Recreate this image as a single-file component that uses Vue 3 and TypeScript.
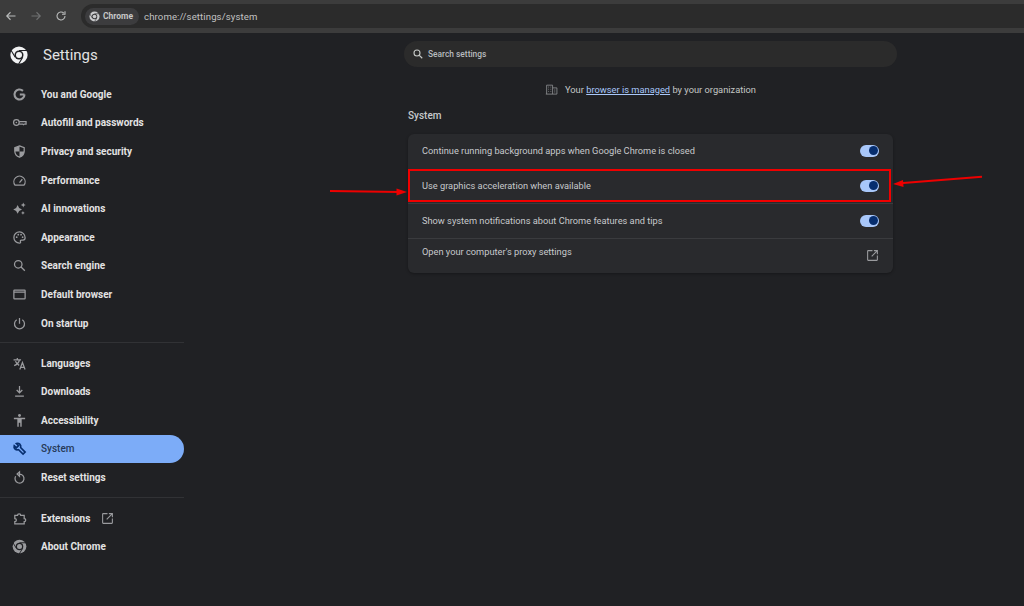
<script setup lang="ts">
// Page Settings > System de Chrome, thème sombre, avec annotations rouges par-dessus.
type NavItem = { label: string; icon: string; active?: boolean; external?: boolean }

const icons: Record<string, string> = {
  gauge: 'M4.800 19.500h14.400a9 9 0 1 0-14.400 0zM12 15.500l4.500-5.500',
  search: 'M10 4a6 6 0 1 0 0 12 6 6 0 0 0 0-12zM14.500 14.500L20.500 20.500',
  window: 'M4 5h16a1 1 0 0 1 1 1v12a1 1 0 0 1-1 1H4a1 1 0 0 1-1-1V6a1 1 0 0 1 1-1zM3 8h18',
  power: 'M12 3v9.500M7.500 6a8 8 0 1 0 9 0',
  translate: 'M2.500 6h12M8.500 3v3M12 6c-.8 3.700-3.500 7.200-8.500 9.500M5.500 8.500c1 2.500 3.500 5 6 6.500M12.500 21.500l4.200-11 4.200 11M14 18h5.500',
  download: 'M12 3v11M7.500 9.500L12 14l4.500-4.500M5 19.500h14',
  reset: 'M12 6.500a7.200 7.200 0 1 1-6.200 3.500M12 3v7l-3.800-3.500z',
  puzzle: 'M4.500 7h4.300a2.600 2.600 0 0 1 5.200 0h5.500v5a2.500 2.500 0 0 1 0 5v3.500H4.500V17a2.500 2.500 0 0 0 0-5z',
}

const groups: NavItem[][] = [
  [
    { label: 'You and Google', icon: 'google' },
    { label: 'Autofill and passwords', icon: 'key' },
    { label: 'Privacy and security', icon: 'shield' },
    { label: 'Performance', icon: 'gauge' },
    { label: 'AI innovations', icon: 'sparkle' },
    { label: 'Appearance', icon: 'palette' },
    { label: 'Search engine', icon: 'search' },
    { label: 'Default browser', icon: 'window' },
    { label: 'On startup', icon: 'power' },
  ],
  [
    { label: 'Languages', icon: 'translate' },
    { label: 'Downloads', icon: 'download' },
    { label: 'Accessibility', icon: 'person' },
    { label: 'System', icon: 'wrench', active: true },
    { label: 'Reset settings', icon: 'reset' },
  ],
  [
    { label: 'Extensions', icon: 'puzzle', external: true },
    { label: 'About Chrome', icon: 'chrome' },
  ],
]

const rows = [
  { label: 'Continue running background apps when Google Chrome is closed', toggle: true },
  { label: 'Use graphics acceleration when available', toggle: true, marked: true },
  { label: 'Show system notifications about Chrome features and tips', toggle: true },
  { label: "Open your computer's proxy settings", toggle: false },
]
</script>

<template>
  <div class="page">
    <header class="toolbar">
      <svg class="tb-icon back" viewBox="0 0 24 24"><path d="M21 12H4M11 4.500L3.500 12l7.500 7.500" /></svg>
      <svg class="tb-icon forward dim" viewBox="0 0 24 24"><path d="M3 12h17M13 4.500l7.500 7.500-7.500 7.500" /></svg>
      <svg class="tb-icon reload" viewBox="0 0 24 24"><path d="M20 12a8 8 0 1 1-2.300-5.700M20 2.500v6h-6" /></svg>
      <div class="omnibox">
        <span class="chip">
          <svg class="chip-logo" viewBox="0 0 24 24">
            <circle cx="12" cy="12" r="11" fill="#c9cacc" />
            <circle cx="12" cy="12" r="6" fill="#3c3c3e" />
            <circle cx="12" cy="12" r="4" fill="#c9cacc" />
            <path d="M12 6h10M7 15L2 6.500M17 15l-5 8.500" stroke="#3c3c3e" stroke-width="1.500" fill="none" />
          </svg>
          Chrome
        </span>
        <span class="url">chrome://settings/system</span>
      </div>
    </header>

    <div class="body">
      <aside class="sidebar">
        <div class="brand">
          <svg class="brand-logo" viewBox="0 0 24 24">
            <circle cx="12" cy="12" r="11.500" fill="#f1f2f3" />
            <circle cx="12" cy="12" r="6" fill="#202124" />
            <circle cx="12" cy="12" r="4" fill="#f1f2f3" />
            <path d="M12 6h11M7 15L1.500 6M17 15l-5.500 9" stroke="#202124" stroke-width="1.500" fill="none" />
          </svg>
          <span class="brand-name">Settings</span>
        </div>

        <nav v-for="(group, i) in groups" :key="i" class="nav-group">
          <a v-for="item in group" :key="item.label" class="nav-item" :class="{ active: item.active }">
            <svg class="nav-icon" viewBox="0 0 24 24">
              <path v-if="icons[item.icon]" :d="icons[item.icon]" />
              <path v-else-if="item.icon === 'google'" class="heavy" d="M20 12h-7.500M20 12a8 8 0 1 1-2.500-5.800" />
              <template v-else-if="item.icon === 'key'">
                <circle cx="7" cy="12" r="4.500" />
                <circle class="solid" cx="7" cy="12" r="1.300" />
                <path d="M11.500 10.500H22.500v4h-3l-1.200 1-1.200-1h-5.600" />
              </template>
              <template v-else-if="item.icon === 'shield'">
                <path d="M12 3l7.500 2.800v5.700c0 4.500-3.100 8-7.500 9.500-4.400-1.500-7.500-5-7.500-9.500V5.800z" />
                <path class="solid" d="M12 3v9H4.500V5.800zM12 12h7.500c0 4.500-3.100 8-7.500 9.500z" />
              </template>
              <template v-else-if="item.icon === 'sparkle'">
                <path class="solid" d="M9 6.500l2.400 4.600 4.600 2.400-4.600 2.400L9 20.500l-2.400-4.600L2 13.500l4.600-2.400zM18 2.500l1.200 2.800L22 6.500l-2.800 1.200L18 10.500l-1.200-2.800L14 6.500l2.800-1.200zM17.500 16l1 2 2 1-2 1-1 2-1-2-2-1 2-1z" />
              </template>
              <template v-else-if="item.icon === 'palette'">
                <path d="M12 3a9 9 0 0 0 0 18c1.700 0 2.100-1 1.600-2.100-.7-1.400 0-2.800 1.600-2.800h2.300c1.900 0 3.500-1.500 3.500-3.700C21 7.200 17 3 12 3z" />
                <circle class="solid" cx="7.500" cy="11.500" r="1.400" />
                <circle class="solid" cx="10" cy="7.500" r="1.400" />
                <circle class="solid" cx="14.500" cy="7.500" r="1.400" />
                <circle class="solid" cx="17" cy="11.500" r="1.400" />
              </template>
              <template v-else-if="item.icon === 'person'">
                <circle class="solid" cx="12" cy="4" r="2.300" />
                <path class="solid" d="M3 7.500h18v2.300h-5.500V22h-2.300v-6.500h-2.400V22H8.500V9.800H3z" />
              </template>
              <path v-else-if="item.icon === 'wrench'" class="wrench" d="M3.500 7.500L7 11l3.500-3.500L7 4a5.200 5.200 0 0 1 6.800 6.500l7.200 7.200-3.300 3.300-7.200-7.200A5.200 5.200 0 0 1 3.500 7.500z" />
              <template v-else>
                <circle class="solid" cx="12" cy="12" r="11" />
                <circle class="cut" cx="12" cy="12" r="6" />
                <circle class="solid" cx="12" cy="12" r="4" />
                <path class="seam" d="M12 6h11M7 15L1.500 6M17 15l-5.500 9" />
              </template>
            </svg>
            <span>{{ item.label }}</span>
            <svg v-if="item.external" class="ext-icon" viewBox="0 0 24 24">
              <path d="M12 3H4a1 1 0 0 0-1 1v16a1 1 0 0 0 1 1h16a1 1 0 0 0 1-1v-8M14.500 3H21v6.500M21 3L10.500 13.500" />
            </svg>
          </a>
        </nav>
      </aside>

      <main class="main">
        <div class="search">
          <svg class="search-icon" viewBox="0 0 24 24"><path :d="icons.search" /></svg>
          <span>Search settings</span>
        </div>

        <p class="managed">
          <svg class="managed-icon" viewBox="0 0 24 24">
            <path d="M3 20.500V4h11v16.500M14 9h8v11.500H1.500M6 7.500h1.500M10 7.500h1.500M6 11.500h1.500M10 11.500h1.500M6 15.500h1.500M10 15.500h1.500M17 13h2M17 16.500h2" />
          </svg>
          <span>Your <u>browser is managed</u> by your organization</span>
        </p>

        <h2 class="section">System</h2>

        <section class="card">
          <div v-for="row in rows" :key="row.label" class="row" :class="{ marked: row.marked, link: !row.toggle }">
            <span class="row-label">{{ row.label }}</span>
            <span v-if="row.toggle" class="toggle"><i class="knob" /></span>
            <svg v-else class="row-ext" viewBox="0 0 24 24">
              <path d="M12 3H4a1 1 0 0 0-1 1v16a1 1 0 0 0 1 1h16a1 1 0 0 0 1-1v-8M14.500 3H21v6.500M21 3L10.500 13.500" />
            </svg>
          </div>
        </section>
      </main>
    </div>

    <!-- Annotations rouges : elles flottent au-dessus de la page -->
    <svg class="annotations" viewBox="0 0 1024 606">
      <path d="M330 191L400 192" />
      <path d="M982 176.700L900 183.300" />
      <polygon points="407,192 396.500,188.500 396.500,195.500" />
      <polygon points="893,184 903,180 903.500,187" />
    </svg>
  </div>
</template>

<style>
html,
body {
  background: #202124;
}
</style>

<style scoped>
.page {
  position: relative;
  width: 1024px;
  height: 606px;
  overflow: hidden;
  background: #202124;
  color: #e3e3e3;
  font-family: Roboto, "Liberation Sans", sans-serif;
  font-size: 10px;
}
.toolbar {
  display: flex;
  align-items: center;
  height: 33px;
  padding: 4px 0 5px 5px;
  box-sizing: border-box;
  background: #3c3c3c;
}
.tb-icon {
  flex: none;
  width: 12px;
  height: 12px;
  fill: none;
  stroke: #b9bbbb;
  stroke-width: 2.200;
}
.tb-icon.forward {
  margin-left: 13px;
}
.tb-icon.reload {
  margin-left: 13px;
}
.tb-icon.dim {
  stroke: #6f7071;
}
.omnibox {
  display: flex;
  align-items: center;
  flex: 1;
  height: 24px;
  margin-left: 14px;
  padding-left: 4px;
  border-radius: 12px 0 0 12px;
  background: #2b2b2b;
}
.chip {
  display: flex;
  align-items: center;
  gap: 3px;
  height: 17px;
  padding: 0 6px 0 4px;
  border-radius: 9px;
  background: #3c3c3e;
  color: #c7c7c7;
  font-size: 8.500px;
  font-weight: 700;
}
.chip-logo {
  width: 11px;
  height: 11px;
}
.url {
  margin-left: 5px;
  color: #c2c2c2;
  font-size: 9.600px;
  letter-spacing: 0.1px;
}
.body {
  display: flex;
  height: 573px;
}
.sidebar {
  flex: none;
  width: 184px;
}
.brand {
  display: flex;
  align-items: center;
  gap: 15px;
  height: 43px;
  padding-left: 10px;
}
.brand-logo {
  width: 18px;
  height: 18px;
}
.brand-name {
  font-size: 15px;
  color: #e3e3e3;
}
.nav-group {
  display: flex;
  flex-direction: column;
  padding: 6px 0 5px;
  border-bottom: 1px solid #313235;
}
.nav-group:first-of-type {
  padding: 4px 0 4.400px;
}
.nav-group:last-child {
  border-bottom: 0;
}
.nav-item {
  display: flex;
  align-items: center;
  height: 28.600px;
  padding-left: 12px;
  border-radius: 0 15px 15px 0;
  color: #e3e3e3;
  font-size: 10px;
  font-weight: 700;
}
.nav-item.active {
  background: #7cacf8;
  color: #263a58;
  font-weight: 500;
}
.nav-icon {
  flex: none;
  width: 15px;
  height: 15px;
  margin-right: 14px;
  fill: none;
  stroke: #9a9b9e;
  stroke-width: 2;
}
.nav-icon .heavy {
  stroke-width: 3.400;
}
.nav-icon .solid {
  fill: #9a9b9e;
  stroke: none;
}
.nav-icon .cut {
  fill: #202124;
  stroke: none;
}
.nav-icon .seam {
  stroke: #202124;
  stroke-width: 1.500;
}
.nav-icon .wrench {
  stroke: #062e6f;
  stroke-width: 2.600;
}
.ext-icon {
  width: 13px;
  height: 13px;
  margin-left: 11px;
  fill: none;
  stroke: #9a9b9e;
  stroke-width: 2;
}
.main {
  flex: 1;
  padding-left: 220px;
}
.search {
  display: flex;
  align-items: center;
  gap: 4px;
  width: 493px;
  height: 26px;
  margin-top: 8px;
  padding-left: 8px;
  box-sizing: border-box;
  border-radius: 13px;
  background: #2b2b2b;
  color: #b8bbbf;
  font-size: 8.400px;
  font-weight: 500;
}
.search-icon {
  width: 12px;
  height: 12px;
  fill: none;
  stroke: #c4c7c5;
  stroke-width: 2.200;
}
.managed {
  display: flex;
  align-items: center;
  justify-content: center;
  gap: 7px;
  width: 493px;
  height: 14px;
  margin: 15px 0 0;
  color: #c4c7c5;
  font-size: 9.300px;
}
.managed u {
  color: #a8c7fa;
}
.managed-icon {
  width: 13px;
  height: 13px;
  fill: none;
  stroke: #8f9194;
  stroke-width: 1.500;
}
.section {
  margin: 13px 0 0 4px;
  height: 14px;
  line-height: 14px;
  color: #c7c9cc;
  font-size: 10px;
  font-weight: 500;
}
.card {
  width: 485px;
  margin: 11px 0 0 4px;
  border-radius: 6px;
  background: #292a2d;
  box-shadow: 0 1px 3px rgba(0, 0, 0, 0.3);
}
.row {
  display: flex;
  align-items: center;
  justify-content: space-between;
  height: 35px;
  padding: 0 14px 1px;
  border-top: 1px solid #3a3b3e;
  box-sizing: border-box;
}
.row:first-child {
  border-top: 0;
  height: 34px;
}
.row.marked {
  position: relative;
  z-index: 1;
  border-top: 0;
  margin-top: 1px;
  margin-bottom: -1px;
  padding-bottom: 2px;
}
.row.marked::after {
  content: "";
  position: absolute;
  left: 0;
  right: 2px;
  top: 0;
  height: 33px;
  box-sizing: border-box;
  border: 2px solid #f00000;
}
.row.link {
  align-items: flex-start;
  padding-top: 7px;
}
.row-label {
  color: #c7c9cc;
  font-size: 9.250px;
}
.toggle {
  display: flex;
  align-items: center;
  justify-content: flex-end;
  width: 19px;
  height: 12px;
  padding-right: 1.500px;
  box-sizing: border-box;
  border-radius: 6px;
  background: #a8c7fa;
}
.knob {
  width: 9px;
  height: 9px;
  border-radius: 50%;
  background: #062e6f;
}
.row-ext {
  width: 13px;
  height: 13px;
  margin-top: 3px;
  fill: none;
  stroke: #9a9b9e;
  stroke-width: 2;
}
.annotations {
  position: absolute;
  inset: 0;
  width: 1024px;
  height: 606px;
  pointer-events: none;
}
.annotations path {
  fill: none;
  stroke: #ee0000;
  stroke-width: 2;
}
.annotations polygon {
  fill: #ee0000;
}
</style>
